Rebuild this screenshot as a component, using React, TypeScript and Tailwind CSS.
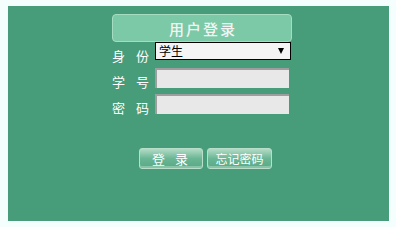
export default function App() {
  const font = "font-['SimSun','Noto_Sans_CJK_SC',sans-serif]";
  return (
    <div className={`w-[396px] h-[227px] bg-[#f4fffd] pt-[6px] pl-[8px] ${font}`}>
      <div className="w-[381px] h-[215px] bg-[#479c7a] pt-[8px] pl-[104px]">
        <div className="w-[180px]">
          {/* title */}
          <div className="h-[28px] rounded-[4px] border border-[#a6dcc2] bg-[#7bc9a6] flex items-center justify-center text-[15px] font-medium leading-none tracking-[2px] text-[#f4f4f4] pl-[2px]">
            用户登录
          </div>

          {/* identity */}
          <div className="flex h-[18px]">
            <div className="w-[43px] pt-[8px] text-[13px] leading-[12px] text-white flex">
              <span className="w-[24px]">身</span>
              <span>份</span>
            </div>
            <div className="w-[136px] h-[18px] border border-black bg-[#f4f4f4] flex items-center justify-between pl-[3px] pr-[6px]">
              <span className="text-[12px] leading-none text-black">学生</span>
              <svg width="6" height="6" viewBox="0 0 6 6">
                <path d="M0 0H6L3 6Z" fill="#000" />
              </svg>
            </div>
          </div>

          {/* student number */}
          <div className="flex h-[20px] mt-[8px]">
            <div className="w-[43px] pt-[8px] text-[13px] leading-[12px] text-white flex">
              <span className="w-[24px]">学</span>
              <span>号</span>
            </div>
            <input className="w-[134px] h-[20px] bg-[#e8e8e8] border-t-2 border-l-2 border-[#9e9e9e] outline-none" />
          </div>

          {/* password */}
          <div className="flex h-[20px] mt-[6px]">
            <div className="w-[43px] pt-[8px] text-[13px] leading-[12px] text-white flex">
              <span className="w-[24px]">密</span>
              <span>码</span>
            </div>
            <input
              type="password"
              className="w-[134px] h-[20px] bg-[#e8e8e8] border-t-2 border-l-2 border-[#9e9e9e] outline-none"
            />
          </div>

          {/* buttons */}
          <div className="flex gap-[4px] mt-[34px] pl-[27px]">
            <button className="w-[64px] h-[21px] rounded-[3px] border border-[#b9dfcb] bg-gradient-to-b from-[#b2dcc6] via-[#6ab695] to-[#58a886] shadow-[inset_0_-2px_0_#86c4a8] text-white text-[13px] leading-none tracking-[10px] pl-[8px]">
              登录
            </button>
            <button className="w-[65px] h-[21px] rounded-[3px] border border-[#b9dfcb] bg-gradient-to-b from-[#b2dcc6] via-[#6ab695] to-[#58a886] shadow-[inset_0_-2px_0_#86c4a8] text-white text-[12px] leading-none">
              忘记密码
            </button>
          </div>
        </div>
      </div>
    </div>
  );
}
